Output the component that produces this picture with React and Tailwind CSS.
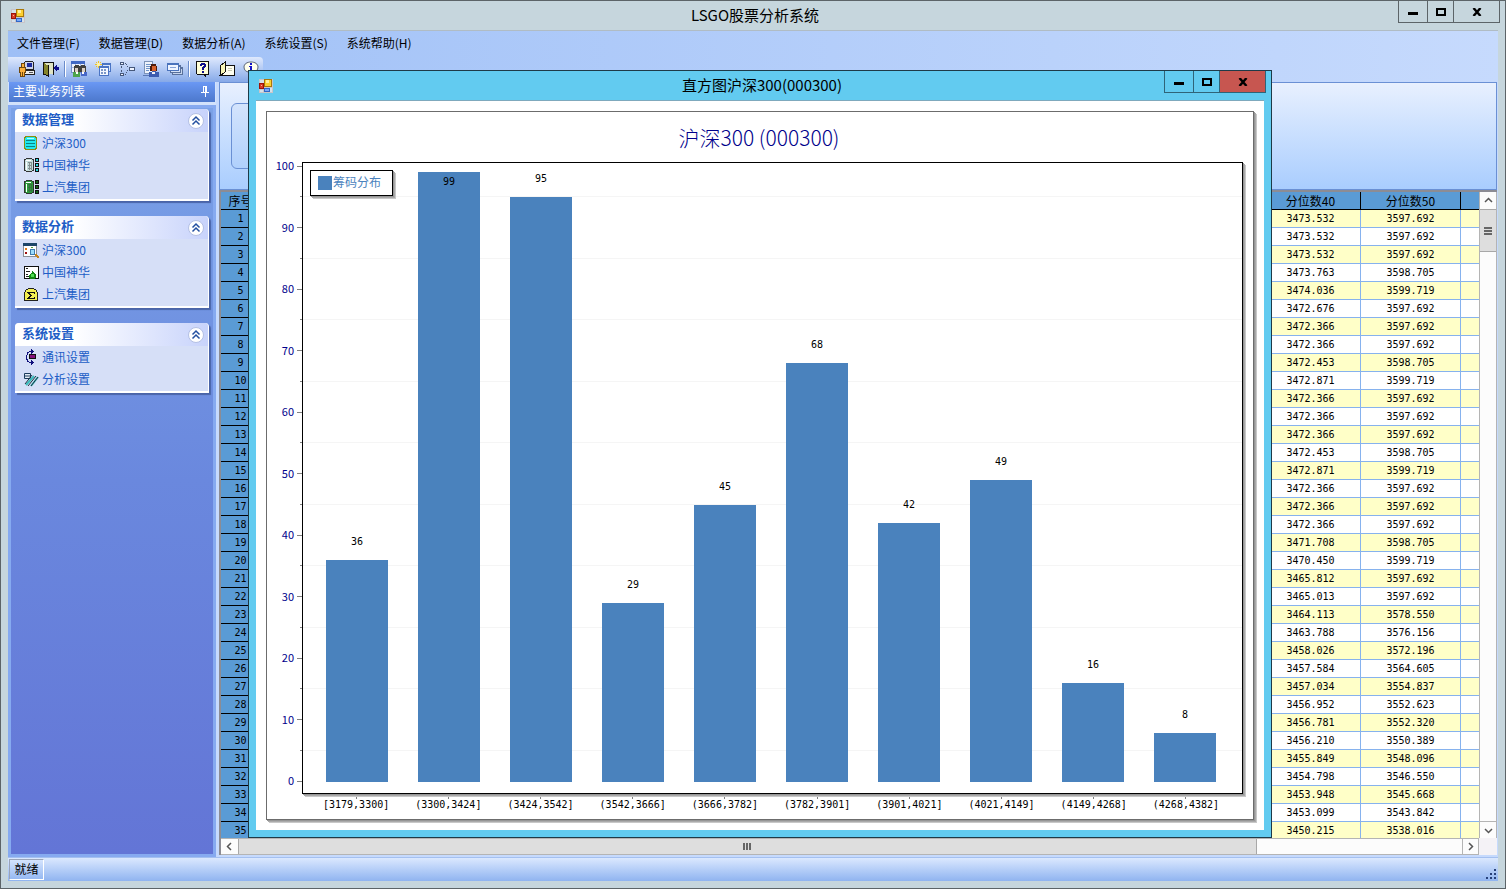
import React, { useState } from 'react'

const menus = ['文件管理(F)', '数据管理(D)', '数据分析(A)', '系统设置(S)', '系统帮助(H)']

const bins = [
  { range: '[3179,3300]', count: 36 },
  { range: '(3300,3424]', count: 99 },
  { range: '(3424,3542]', count: 95 },
  { range: '(3542,3666]', count: 29 },
  { range: '(3666,3782]', count: 45 },
  { range: '(3782,3901]', count: 68 },
  { range: '(3901,4021]', count: 42 },
  { range: '(4021,4149]', count: 49 },
  { range: '(4149,4268]', count: 16 },
  { range: '(4268,4382]', count: 8 },
]

// 100, 95, 90 ... 0
const ticks = Array.from({ length: 21 }, (_, i) => 100 - i * 5)

const rows = [
  ['3473.532', '3597.692'],
  ['3473.532', '3597.692'],
  ['3473.532', '3597.692'],
  ['3473.763', '3598.705'],
  ['3474.036', '3599.719'],
  ['3472.676', '3597.692'],
  ['3472.366', '3597.692'],
  ['3472.366', '3597.692'],
  ['3472.453', '3598.705'],
  ['3472.871', '3599.719'],
  ['3472.366', '3597.692'],
  ['3472.366', '3597.692'],
  ['3472.366', '3597.692'],
  ['3472.453', '3598.705'],
  ['3472.871', '3599.719'],
  ['3472.366', '3597.692'],
  ['3472.366', '3597.692'],
  ['3472.366', '3597.692'],
  ['3471.708', '3598.705'],
  ['3470.450', '3599.719'],
  ['3465.812', '3597.692'],
  ['3465.013', '3597.692'],
  ['3464.113', '3578.550'],
  ['3463.788', '3576.156'],
  ['3458.026', '3572.196'],
  ['3457.584', '3564.605'],
  ['3457.034', '3554.837'],
  ['3456.952', '3552.623'],
  ['3456.781', '3552.320'],
  ['3456.210', '3550.389'],
  ['3455.849', '3548.096'],
  ['3454.798', '3546.550'],
  ['3453.948', '3545.668'],
  ['3453.099', '3543.842'],
  ['3450.215', '3538.016'],
]

const Icon = ({ children }) => (
  <svg width="16" height="16" viewBox="0 0 16 16" shapeRendering="crispEdges" className="shrink-0" aria-hidden="true">
    {children}
  </svg>
)

const AppIcon = () => (
  <Icon>
    <rect x="1" y="1" width="14" height="14" fill="#c9c5c9" />
    <path d="M2 2h4v3H2zM2 12h3v2H2zM12 10h2v4h-2z" fill="#d6e2ea" />
    <rect x="6" y="1" width="8" height="8" fill="#a87808" />
    <rect x="7" y="2" width="6" height="6" fill="#fccf30" />
    <rect x="8" y="2" width="3" height="3" fill="#fff0a0" />
    <rect x="1" y="5" width="5" height="6" fill="#9c1208" />
    <rect x="2" y="6" width="3" height="4" fill="#d83c24" />
    <rect x="3" y="7" width="1" height="1" fill="#f8b09c" />
    <rect x="6" y="10" width="6" height="4" fill="#3068c8" />
    <rect x="7" y="11" width="4" height="2" fill="#78a8f8" />
  </Icon>
)

const UserIcon = () => (
  <Icon>
    <path d="M6 0h8v1h1v8H5V1h1z" fill="#222" />
    <path d="M6 1h8v7H6z" fill="#ccd3e8" />
    <path d="M8 2h5v4H8z" fill="#1c2c9c" />
    <path d="M5 9h11v5H5z" fill="#222" />
    <path d="M6 10h9v3H6z" fill="#eee" />
    <path d="M10 11h4v1h-4z" fill="#555" />
    <path d="M2 2h4v4H2zM0 6h7v6H6v4H1v-4H0z" fill="#70480c" />
    <path d="M3 3h2v3H3zM1 7h5v4H1zM2 11h1v4H2zM4 11h1v4H4z" fill="#fcb13c" />
  </Icon>
)

const ExitIcon = () => (
  <Icon>
    <path d="M0 1h11v13h-1V2H1v12H0z" fill="#111" />
    <path d="M1 2h9v11H1z" fill="#dfe4c4" />
    <path d="M1 2l5 3v11l-5-3z" fill="#85852c" />
    <path d="M5 4h1v12H5zM1 13h2v1H1zM3 14h2v1H3z" fill="#111" />
    <path d="M10 7l4-4v3h2v3h-2v2z" fill="#10108c" />
  </Icon>
)

const PeopleIcon = () => (
  <Icon>
    <path d="M0 0h14v12H0z" fill="#7390cc" />
    <path d="M1 3h12v8H1z" fill="#eef3fc" />
    <path d="M0 0h14v3H0z" fill="#4169c4" />
    <path d="M4 3h1v8H4zM9 3h1v3H9zM1 6h12v1H1z" fill="#a9bce0" />
    <path d="M4 4h4v1h1v6H3V5h1zM10 4h4v1h1v6H9V5h1z" fill="#40403c" />
    <path d="M4 7h3v4H4zM11 7h3v4h-3z" fill="#dcd0c4" />
    <path d="M2 11h7v5H2z" fill="#4da44c" />
    <path d="M10 11h6v4h-6z" fill="#4868c8" />
    <path d="M5 11h2v2H5zM11 11h2v2h-2z" fill="#fff" />
  </Icon>
)

const NewFormIcon = () => (
  <Icon>
    <path d="M3 0h1v7H3zM0 3h7v1H0zM1 1h1v1H1zM5 1h1v1H5zM1 5h1v1H1zM5 5h1v1H5z" fill="#f4c51c" />
    <path d="M2 2h3v3H2z" fill="#fff2a0" />
    <path d="M7 2h9v9H7z" fill="#4a74c4" />
    <path d="M8 4h7v6H8z" fill="#dce8fa" />
    <path d="M4 5h10v10H4z" fill="#4a74c4" />
    <path d="M5 7h8v7H5z" fill="#f4f8ff" />
    <path d="M6 8h2v2H6zM9 8h2v2H9zM6 11h2v2H6zM9 11h2v2H9z" fill="#7c98c8" />
  </Icon>
)

const FlowIcon = () => (
  <Icon>
    <path d="M1 1h4v3H1zM1 12h4v3H1zM10 6h6v4h-6z" fill="#46587a" />
    <path d="M2 2h2v1H2zM2 13h2v1H2zM11 7h4v2h-4z" fill="#eef4ff" />
    <path d="M6 2h1v1H6zM7 3h1v1H7zM8 5h1v1H8zM8 9h1v1H8zM7 11h1v1H7zM6 13h1v1H6zM2 5h1v2H2zM2 9h1v2H2z" fill="#46587a" />
  </Icon>
)

const ReportUserIcon = () => (
  <Icon>
    <path d="M1 0h9v13H1z" fill="#7c93b8" />
    <path d="M2 1h7v11H2z" fill="#eef3fb" />
    <path d="M3 3h5v1H3zM3 5h4v1H3zM3 7h4v1H3zM3 9h3v1H3z" fill="#6f94c8" />
    <path d="M8 3h5v2h1v5H7V5h1z" fill="#4c1c0c" />
    <path d="M9 5h4v5H9z" fill="#d8622c" />
    <path d="M6 11h3v-1h4v1h3v5H6z" fill="#3c5cb0" />
    <path d="M9 11h3v2H9z" fill="#f2f2f8" />
    <path d="M0 14h6v1H0z" fill="#5a78b4" />
  </Icon>
)

const WindowsIcon = () => (
  <Icon>
    <path d="M5 6h11v8H5z" fill="#58709c" />
    <path d="M6 8h9v5H6z" fill="#c5d4ee" />
    <path d="M3 4h11v8H3z" fill="#58709c" />
    <path d="M4 6h9v5H4z" fill="#d5e2f7" />
    <path d="M0 2h12v8H0z" fill="#4a73bc" />
    <path d="M1 4h10v5H1z" fill="#eef4ff" />
    <path d="M3 6h6v1H3z" fill="#86a4d8" />
  </Icon>
)

const HelpIcon = () => (
  <Icon>
    <path d="M1 0h13v14h-3v2h-1v-1H9v-1H2v-1H1z" fill="#111" />
    <path d="M2 1h11v12H2z" fill="#ffffd8" />
    <path d="M5 3h1V2h4v1h1v3h-1v1H9v2H7V6h1V5h1V4H7v1H5zM7 10h2v2H7z" fill="#10108c" />
  </Icon>
)

const BookIcon = () => (
  <Icon>
    <path d="M6 4h9v10H1l5-3z" fill="#fffff0" stroke="#111" />
    <path d="M1 5l5-4v10l-5 4z" fill="#f8f6b8" stroke="#111" />
    <path d="M9 7h4v1H9zM9 9h4v1H9z" fill="#c8c8b0" />
  </Icon>
)

const InfoIcon = () => (
  <svg width="16" height="16" viewBox="0 0 16 16" className="shrink-0" aria-hidden="true">
    <path d="M8 1c4 0 7 2 7 5s-2 5-5 5l-1 4-3-4c-3 0-5-2-5-5s3-5 7-5z" fill="#ffffec" stroke="#5a6478" />
    <path d="M7 2h2v2H7zM6 5h3v4h1v1H6V9h1V6H6z" fill="#1414c8" />
  </svg>
)

const toolGroups = [
  [
    { label: '用户', icon: UserIcon },
    { label: '退出', icon: ExitIcon },
  ],
  [
    { label: '人员', icon: PeopleIcon },
    { label: '新建', icon: NewFormIcon },
    { label: '流程', icon: FlowIcon },
    { label: '报告', icon: ReportUserIcon },
    { label: '窗口', icon: WindowsIcon },
  ],
  [
    { label: '帮助', icon: HelpIcon },
    { label: '手册', icon: BookIcon },
    { label: '关于', icon: InfoIcon },
  ],
]

const DbIcon = () => (
  <Icon>
    <path d="M2 1h11v1h1v12h-1v1H2v-1H1V2h1z" fill="#8c8c10" />
    <path d="M3 2h9v1h1v10h-1v1H3v-1H2V3h1z" fill="#20e8f0" />
    <path d="M3 5h9v1H3zM3 8h9v1H3zM3 11h9v1H3z" fill="#0c8484" />
    <path d="M4 3h7v1H4z" fill="#b4ffff" />
  </Icon>
)

const ServerIcon = ({ body, box }) => (
  <Icon>
    <path d="M3 1h6v1h2v12H9v1H3v-1H1V2h2z" fill="#333" />
    <path d="M3 2h6v1h1v10H9v1H3v-1H2V3h1z" fill={body} />
    <path d="M3 3h5v1H3zM3 5h1v8H3z" fill="#fff" />
    <path d="M5 5h4v1H5zM5 8h4v1H5zM5 11h4v1H5zM6 6h1v7H6zM8 6h1v7H8z" fill="#444" fillOpacity="0.5" />
    <path d="M12 1h4v4h-4zM12 6h4v4h-4zM12 11h4v4h-4z" fill="#111" />
    <path d="M13 2h2v2h-2zM13 7h2v2h-2zM13 12h2v2h-2z" fill={box} />
  </Icon>
)

const ReportIcon = () => (
  <Icon>
    <path d="M0 1h14v14H0z" fill="#8a8f98" />
    <path d="M1 4h12v10H1z" fill="#fff" />
    <path d="M0 1h14v3H0z" fill="#1c4468" />
    <path d="M2 6h2v2H2z" fill="#e07818" />
    <path d="M2 10h2v2H2z" fill="#a01010" />
    <path d="M8 5h2v1H8z" fill="#50a038" />
    <path d="M7 7h5v6H7z" fill="#3c7cb0" />
    <path d="M8 8h3v4H8z" fill="#9cdcfc" />
    <path d="M12 12h2v1h1v1h1v2h-2v-1h-1v-1h-1z" fill="#c8841c" />
  </Icon>
)

const SheetIcon = () => (
  <Icon>
    <path d="M1 2h15v13H1z" fill="#111" />
    <path d="M2 3h13v11H2z" fill="#fff" />
    <path d="M3 4h2v1H3zM3 7h4v1H3zM3 10h2v1H3zM3 12h3v1H3z" fill="#222" />
    <path d="M9 7h1v1h1v1h1v1h1v4h-1v1H7v-1H6v-3h1v-1h1V9h1z" fill="#138813" />
    <path d="M8 10h3v3H8z" fill="#50dc50" />
  </Icon>
)

const SigmaIcon = () => (
  <Icon>
    <path d="M5 2h6v1h2v1h1v2h1v9H1V6h1V4h1V3h2z" fill="#222" />
    <path d="M5 3h6v1h2v2h1v8H2V6h1V4h2z" fill="#f4f050" />
    <path d="M4 6h8v2h-1V7H7v1h1v1h1v1H8v1H7v1h4v-1h1v2H4v-1h1v-1h1v-1h1V9H6V8H5V7H4z" fill="#111" />
  </Icon>
)

const LinkIcon = () => (
  <Icon>
    <path d="M8 0h1v1h1v1h1v1h-1v1H9v1H8V3H6v1H5v2H4v4h1v2h1v1h2v-2h1v1h1v1h1v1h-1v1H9v1H8v-2H6v-1H4v-2H3V6h1V3h2V2h2z" fill="#10107c" />
    <path d="M6 5h7v5H6z" fill="#111" />
    <path d="M7 6h5v3H7z" fill="#84107c" />
  </Icon>
)

const FilterIcon = () => (
  <svg width="16" height="16" viewBox="0 0 16 16" className="shrink-0" aria-hidden="true">
    <path d="M1.500 2.500h6v5h-6zM2 5h6" fill="#e4ecf4" stroke="#1c3c5c" />
    <path d="M3 14l8-9M8 15l7-9" stroke="#3cbcbc" strokeWidth="2" />
    <path d="M2 13l7-9M5 15l8-10M8 15l7-9" stroke="#203040" />
  </svg>
)

const groups = [
  {
    title: '数据管理',
    items: [
      { text: '沪深300', icon: <DbIcon /> },
      { text: '中国神华', icon: <ServerIcon body="#c4dcdc" box="#28d8e0" /> },
      { text: '上汽集团', icon: <ServerIcon body="#2c9c3c" box="#14641c" /> },
    ],
  },
  {
    title: '数据分析',
    items: [
      { text: '沪深300', icon: <ReportIcon /> },
      { text: '中国神华', icon: <SheetIcon /> },
      { text: '上汽集团', icon: <SigmaIcon /> },
    ],
  },
  {
    title: '系统设置',
    items: [
      { text: '通讯设置', icon: <LinkIcon /> },
      { text: '分析设置', icon: <FilterIcon /> },
    ],
  },
]

const WindowButtons = ({ border, closeBg, onClose }) => (
  <div className={`flex h-[22px] border border-t-0 ${border}`}>
    <button aria-label="最小化" className="w-7 flex items-center justify-center">
      <span className="w-2.5 h-[3px] bg-black mt-1"></span>
    </button>
    <button aria-label="最大化" className={`w-[26px] flex items-center justify-center border-l ${border}`}>
      <span className="w-2.5 h-2 border-2 border-black"></span>
    </button>
    <button onClick={onClose} aria-label="关闭" className={`w-[46px] flex items-center justify-center border-l ${border} ${closeBg}`}>
      <svg width="10" height="8" viewBox="0 0 10 8" aria-hidden="true">
        <path d="M1.500 0l7 8M8.500 0l-7 8" stroke="#000" strokeWidth="2.400" />
      </svg>
    </button>
  </div>
)

const Arrow = ({ d }) => (
  <svg width="9" height="9" viewBox="0 0 9 9" fill="none" stroke="#555" strokeWidth="1.500" aria-hidden="true">
    <path d={d} />
  </svg>
)

const Panel = ({ group }) => {
  const [open, setOpen] = useState(true)

  return (
    <section className="bg-[#d6dff7] rounded-t border-b-2 border-r border-white shadow-[2px_2px_1px_#4a64a8]">
      <button
        onClick={() => setOpen(!open)}
        className="w-full h-[23px] pl-[7px] pr-[3px] rounded-t flex items-center justify-between bg-linear-to-r from-white from-30% to-[#c8d3fb]"
      >
        <span className="pb-1 text-[13px] leading-4 font-bold text-[#215dc6]">{group.title}</span>
        <svg width="18" height="18" viewBox="0 0 18 18" fill="none" aria-hidden="true">
          <circle cx="9" cy="9" r="7.500" fill="#fff" stroke="#b4c0e4" />
          <path d="M5.500 8.500L9 5l3.500 3.500M5.500 12.500L9 9l3.500 3.500" stroke="#2450a0" strokeWidth="1.500" />
        </svg>
      </button>
      {open && (
        <ul className="pb-px">
          {group.items.map((item) => (
            <li key={item.text}>
              <a href="#" className="h-[22px] pl-2 flex items-center gap-[3px] text-[#215dc6] hover:underline">
                {item.icon}
                <span className="pb-px">{item.text}</span>
              </a>
            </li>
          ))}
        </ul>
      )}
    </section>
  )
}

const Sidebar = () => (
  <aside className="w-[208px] shrink-0 flex flex-col bg-[#d2e2fb]">
    <div className="h-5 mx-px px-1 pb-0.5 flex items-center justify-between bg-linear-to-b from-[#6a98f4] to-[#4c78cc] text-white">
      <h2>主要业务列表</h2>
      <button aria-label="固定">
        <svg width="11" height="12" viewBox="0 0 11 12" fill="none" stroke="#fff" shapeRendering="crispEdges" aria-hidden="true">
          <path d="M3.500 1v6M6.500 1v6M3 1.500h4M1 7.500h8M5 8v4M5.500 1v6" />
        </svg>
      </button>
    </div>
    <div className="flex-1 mt-[3px] border-3 border-[#86aaf0] px-1 pt-px flex flex-col gap-[15px] bg-linear-to-b from-[#7ba2e7] via-[#6a88de] via-50% to-[#6375d6]">
      {groups.map((group) => (
        <Panel key={group.title} group={group} />
      ))}
    </div>
  </aside>
)

const DataGrid = () => (
  <div className="flex-1 min-h-0 flex flex-col border-t-2 border-l-2 border-[#8c8c94] bg-white">
    <div className="flex-1 min-h-0 flex">
      <div className="flex-1 overflow-hidden">
        <table className="w-full table-fixed border-separate border-spacing-0">
          <colgroup>
            <col className="w-10" />
            <col />
            <col className="w-[100px]" />
            <col className="w-[100px]" />
            <col className="w-[18px]" />
          </colgroup>
          <thead>
            <tr className="h-[18px] bg-[#5a9bd5]">
              <th className="p-0 font-normal leading-4 border-r border-b border-black">序号</th>
              <th className="p-0 border-r border-b border-black"></th>
              <th className="p-0 font-normal leading-4 border-r border-b border-black">分位数40</th>
              <th className="p-0 font-normal leading-4 border-r border-b border-black">分位数50</th>
              <th className="p-0 border-b border-black"></th>
            </tr>
          </thead>
          <tbody className="font-['DejaVu_Sans_Mono','Liberation_Mono',monospace] text-[10px] text-center">
            {rows.map((row, i) => (
              <tr key={i} className="h-[18px] odd:bg-[#ffffc8]">
                <th className="p-0 leading-4 font-normal bg-[#5a9bd5] border-r border-b border-black">{i + 1}</th>
                <td className="p-0 border-r border-b border-[#86b2ee]"></td>
                <td className="p-0 leading-4 border-r border-b border-[#86b2ee]">{row[0]}</td>
                <td className="p-0 leading-4 border-r border-b border-[#86b2ee]">{row[1]}</td>
                <td className="p-0 border-b border-[#86b2ee]"></td>
              </tr>
            ))}
          </tbody>
        </table>
      </div>
      <div className="w-[18px] flex flex-col border-x border-[#b4b4b4] bg-[#fcfcfc]">
        <button aria-label="向上" className="h-[17px] flex items-center justify-center"><Arrow d="M1 6l3.500-3.500L8 6" /></button>
        <div className="h-[43px] border-y border-[#a8a8a8] bg-[#dedede] flex flex-col items-center justify-center gap-px">
          <span className="w-2 h-0.5 bg-[#666]"></span>
          <span className="w-2 h-0.5 bg-[#666]"></span>
          <span className="w-2 h-0.5 bg-[#666]"></span>
        </div>
        <button aria-label="向下" className="h-[17px] mt-auto flex items-center justify-center border-t border-[#b4b4b4]"><Arrow d="M1 3l3.500 3.500L8 3" /></button>
      </div>
    </div>
    <div className="h-[17px] flex bg-[#f4f2f6]">
      <div className="flex-1 flex border-y border-[#b4b4b4] bg-[#fcfcfc]">
        <button aria-label="向左" className="w-[17px] flex items-center justify-center"><Arrow d="M6 1L2.500 4.500L6 8" /></button>
        <div className="w-[81%] border-x border-[#a8a8a8] bg-[#dedede] flex items-center justify-center gap-px">
          <span className="h-[7px] w-0.5 bg-[#666]"></span>
          <span className="h-[7px] w-0.5 bg-[#666]"></span>
          <span className="h-[7px] w-0.5 bg-[#666]"></span>
        </div>
        <button aria-label="向右" className="w-[17px] ml-auto flex items-center justify-center border-x border-[#b4b4b4]"><Arrow d="M3 1l3.500 3.500L3 8" /></button>
      </div>
      <div className="w-[18px]"></div>
    </div>
  </div>
)

const Histogram = () => (
  <figure className="flex-1 flex flex-col pr-[10px] border border-[#6c6c6c] bg-white shadow-[1px_1px_0_#969696,2px_2px_0_#aaa,3px_3px_0_#c8c8c8]">
    <figcaption className="h-[50px] pl-2 flex items-center justify-center text-[21px] font-light text-[#00008b]">
      沪深300 (000300)
    </figcaption>
    <div className="flex-1 flex">
      <div className="w-[35px] pb-[9px] flex flex-col justify-between">
        {ticks.map((tick) => (
          <div key={tick} className="h-2 flex items-center justify-end gap-[3px] text-[11px] leading-2 text-[#00008b]">
            {tick % 10 === 0 && <span className="pb-0.5">{tick}</span>}
            <span className={tick % 10 === 0 ? 'w-[5px] h-px bg-[#808080]' : 'w-0.5 h-px bg-[#808080]'}></span>
          </div>
        ))}
      </div>
      <div className="relative flex-1 border border-black shadow-[1px_1px_0_#969696,2px_2px_0_#aaa,3px_3px_0_#c8c8c8]">
        <div className="absolute inset-0 -top-px pb-2 flex flex-col justify-between">
          {ticks.map((tick) => (
            <div key={tick} className="h-2 flex items-center">
              {tick % 10 !== 0 && <span className="flex-1 h-px bg-[#f5f5f5]"></span>}
            </div>
          ))}
        </div>
        <div className="absolute inset-0 pt-[3px] pb-[11px] pl-2 pr-[11px] flex">
          {bins.map((bin) => (
            <div key={bin.range} className="flex-1 flex flex-col items-center justify-end font-['DejaVu_Sans_Mono','Liberation_Mono',monospace] text-[10px] leading-3">
              {bin.count <= 96 && <span className="mb-3">{bin.count}</span>}
              <div className="w-2/3 shrink-0 pt-1 text-center bg-[#4a82bd]" style={{ height: `${bin.count}%` }}>
                {bin.count > 96 && bin.count}
              </div>
            </div>
          ))}
        </div>
        <div className="absolute left-[7px] top-[7px] w-[83px] h-[26px] pl-[7px] flex items-center gap-px border border-black bg-white text-[#4a82bd] shadow-[1px_1px_0_#969696,2px_2px_0_#aaa,3px_3px_0_#c8c8c8]">
          <span className="w-3.5 h-3.5 bg-[#4a82bd]"></span>
          <span className="pb-[3px]">筹码分布</span>
        </div>
      </div>
    </div>
    <div className="h-[25px] pl-[43px] pr-[11px] flex">
      {bins.map((bin) => (
        <div key={bin.range} className="flex-1 flex flex-col items-center font-['DejaVu_Sans_Mono','Liberation_Mono',monospace] text-[10px] leading-3">
          <span className="w-px h-[5px] bg-[#808080]"></span>
          <span>{bin.range}</span>
        </div>
      ))}
    </div>
  </figure>
)

const ChartDialog = ({ onClose }) => (
  <div
    role="dialog"
    aria-label="直方图沪深300(000300)"
    className="absolute left-[247px] right-[233px] top-[69px] bottom-[50px] flex flex-col border border-[#1e3a48] bg-[#62cbf0]"
  >
    <div className="h-[29px] pl-[9px] pr-[5px] grid grid-cols-[1fr_auto_1fr]">
      <div className="flex items-center"><AppIcon /></div>
      <h2 className="text-[15px] leading-[27px]">直方图沪深300(000300)</h2>
      <div className="flex justify-end items-start">
        <WindowButtons border="border-[#2f6478]" closeBg="bg-[#c75650]" onClose={onClose} />
      </div>
    </div>
    <div className="flex-1 mx-[7px] mb-[7px] p-[10px] flex flex-col border-t border-[#7fa9bd] bg-white">
      <Histogram />
    </div>
  </div>
)

const App = () => {
  const [showChart, setShowChart] = useState(true)

  return (
    <div className="relative h-screen px-[7px] pb-[7px] flex flex-col border border-[#5c6468] bg-[#c6d6dd] text-xs text-black font-['Noto_Sans_CJK_SC',sans-serif] overflow-hidden">
      <header className="h-[29px] -mr-0.5 pl-[2px] grid grid-cols-[1fr_auto_1fr]">
        <div className="flex items-center"><AppIcon /></div>
        <h1 className="text-[15px] leading-[27px]">LSGO股票分析系统</h1>
        <div className="flex justify-end items-start">
          <WindowButtons border="border-[#5c6468]" closeBg="" />
        </div>
      </header>

      <div className="border-t border-[#b0bcc4] bg-linear-to-r from-[#9ebff6] to-[#c6dafd]">
        <nav className="h-[26px] pl-[9px] pb-[3px] flex items-center gap-[19px]">
          {menus.map((menu) => (
            <button key={menu}>{menu}</button>
          ))}
        </nav>
        <div className="w-[255px] h-[25px] pl-[3px] pb-0.5 flex items-center rounded-r bg-linear-to-b from-[#dfe9fd] to-[#86a9e8]">
          <span className="w-0.5 mr-1 flex flex-col gap-0.5">
            <i className="h-0.5 bg-[#27417a]"></i>
            <i className="h-0.5 bg-[#27417a]"></i>
            <i className="h-0.5 bg-[#27417a]"></i>
            <i className="h-0.5 bg-[#27417a]"></i>
          </span>
          {toolGroups.map((tools, i) => (
            <div key={i} className="flex items-center">
              {i > 0 && <span className="w-0.5 h-4 mx-px border-l border-[#6a8ccb] bg-white"></span>}
              {tools.map((tool) => (
                <button key={tool.label} aria-label={tool.label} className="w-6 h-6 flex items-center justify-center">
                  <tool.icon />
                </button>
              ))}
            </div>
          ))}
        </div>
      </div>

      <div className="flex-1 min-h-0 flex bg-[#c6dafd]">
        <Sidebar />
        <main className="flex-1 ml-[3px] mr-px mb-0.5 flex flex-col min-w-0">
          <div className="h-[108px] px-[11px] py-5 border border-[#6a90d4] bg-linear-to-b from-[#e8f0fe] to-[#a9cdfe]">
            <div className="w-1/2 h-full rounded-md border border-[#6a90d4] bg-linear-to-b from-[#d4e4fc] to-[#b0d0fc]"></div>
          </div>
          <DataGrid />
        </main>
      </div>

      <footer className="h-6 p-px border-t border-[#a4c0f0] flex justify-between bg-linear-to-b from-[#dbe8fe] to-[#90b4f0]">
        <span className="w-[35px] h-[21px] pb-0.5 flex items-center justify-center border border-t-[#9aa4b8] border-l-[#9aa4b8] border-r-white border-b-white">就绪</span>
        <svg width="12" height="12" viewBox="0 0 12 12" fill="#27417a" shapeRendering="crispEdges" className="self-end" aria-hidden="true">
          <path d="M9 1h2v2H9zM5 5h2v2H5zM9 5h2v2H9zM1 9h2v2H1zM5 9h2v2H5zM9 9h2v2H9z" />
        </svg>
      </footer>

      {showChart && <ChartDialog onClose={() => setShowChart(false)} />}
    </div>
  )
}

export default App
